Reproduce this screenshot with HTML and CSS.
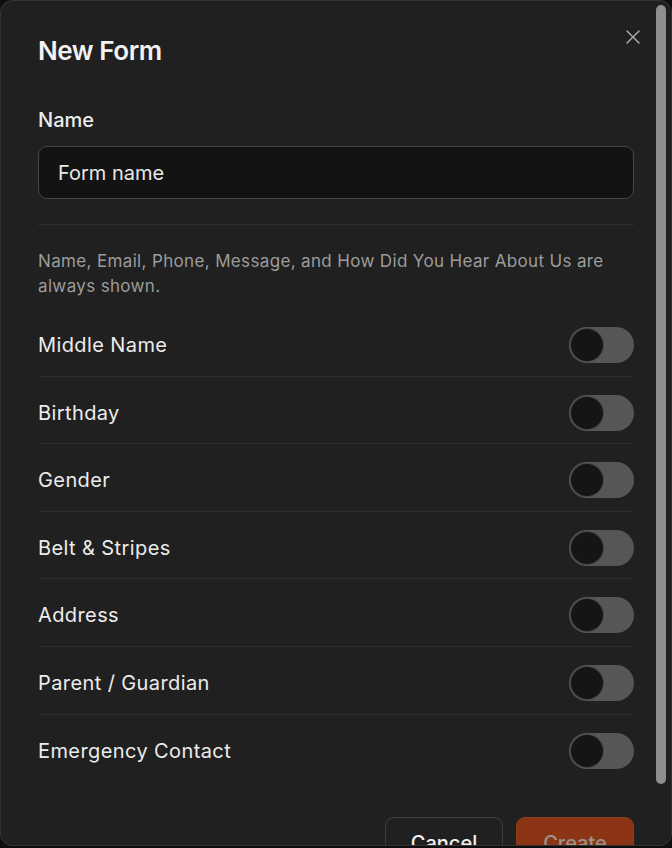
FILE: index.html
```html
<!DOCTYPE html>
<html lang="en">
<head>
<meta charset="utf-8">
<title>New Form</title>
<link rel="stylesheet" href="styles.css">
</head>
<body>
<div class="dialog">
  <div class="content">
    <div class="header">
      <h1 class="title">New Form</h1>
      <button class="close" aria-label="Close">
        <svg width="16" height="16" viewBox="0 0 16 16"><path d="M2 2 L14 14 M14 2 L2 14" stroke="#a3a3a3" stroke-width="1.6" stroke-linecap="round"/></svg>
      </button>
    </div>
    <label class="label">Name</label>
    <div class="input">Form name</div>
    <div class="divider"></div>
    <p class="help">Name, Email, Phone, Message, and How Did You Hear About Us are always shown.</p>
    <div class="list">
      <div class="row"><span class="row-label">Middle Name</span><span class="toggle"><span class="knob"></span></span></div>
      <div class="row"><span class="row-label">Birthday</span><span class="toggle"><span class="knob"></span></span></div>
      <div class="row"><span class="row-label">Gender</span><span class="toggle"><span class="knob"></span></span></div>
      <div class="row"><span class="row-label">Belt &amp; Stripes</span><span class="toggle"><span class="knob"></span></span></div>
      <div class="row"><span class="row-label">Address</span><span class="toggle"><span class="knob"></span></span></div>
      <div class="row"><span class="row-label">Parent / Guardian</span><span class="toggle"><span class="knob"></span></span></div>
      <div class="row"><span class="row-label">Emergency Contact</span><span class="toggle"><span class="knob"></span></span></div>
    </div>
    <div class="footer">
      <button class="btn btn-cancel">Cancel</button>
      <button class="btn btn-create">Create</button>
    </div>
  </div>
  <div class="scroll-thumb"></div>
</div>
</body>
</html>
```
FILE: styles.css
```css
* { box-sizing: border-box; }
html, body { margin: 0; padding: 0; }
body {
  background: #0e0e0e;
  width: 672px;
  height: 848px;
  overflow: hidden;
  font-family: Inter, "Noto Sans", "Liberation Sans", sans-serif;
}
.dialog {
  position: relative;
  width: 672px;
  height: 846px;
  background: #202020;
  border: 1px solid #333333;
  border-radius: 12px;
  overflow: hidden;
}
.content {
  padding: 0 37px 0 37px;
}
.header {
  display: flex;
  justify-content: space-between;
  align-items: flex-start;
  height: 104px;
}
.title {
  margin: 34px 0 0 0;
  font-size: 26px;
  line-height: 32px;
  font-weight: 600;
  color: #f2f2f2;
  letter-spacing: -0.45px;
}
.close {
  margin: 27px -8px 0 0;
  padding: 0;
  width: 18px;
  height: 18px;
  background: none;
  border: none;
  display: flex;
  align-items: center;
  justify-content: center;
}
.label {
  display: block;
  font-size: 20px;
  line-height: 24px;
  font-weight: 500;
  color: #ececec;
  margin: 3px 0 0 0;
}
.input {
  margin-top: 14px;
  height: 53px;
  background: #131313;
  border: 1px solid #464646;
  border-radius: 9px;
  padding: 0 19px;
  display: flex;
  align-items: center;
  font-size: 20px;
  color: #e8e8e8;
}
.divider {
  margin-top: 25px;
  height: 1px;
  background: #2f2f2f;
}
.help {
  margin: 24px 0 0 0;
  font-size: 17px;
  line-height: 25px;
  letter-spacing: 0.35px;
  color: #9c9c9c;
}
.list {
  margin-top: 10px;
}
.row {
  display: flex;
  align-items: center;
  justify-content: space-between;
  padding: 18px 0 12.6px 0;
  border-bottom: 1px solid #2d2d2d;
}
.row:last-child { border-bottom: none; }
.row-label {
  font-size: 20px;
  font-weight: 400;
  letter-spacing: 0.4px;
  color: #ececec;
}
.toggle {
  width: 65px;
  height: 36px;
  border-radius: 18px;
  background: #565656;
  display: flex;
  align-items: center;
  padding: 0 2px;
}
.knob {
  width: 32px;
  height: 32px;
  border-radius: 50%;
  background: #151515;
  box-shadow: 0 0 0 1px #454545;
}
.footer {
  display: flex;
  justify-content: flex-end;
  gap: 13px;
  margin-top: 36px;
}
.btn {
  width: 118px;
  height: 52px;
  border-radius: 9px;
  font-family: Inter, "Noto Sans", "Liberation Sans", sans-serif;
  font-size: 20px;
  font-weight: 500;
  padding: 0;
}
.btn-cancel {
  background: transparent;
  border: 1px solid #3d3d3d;
  color: #f0f0f0;
}
.btn-create {
  background: #8b3516;
  border: 1px solid #8f3a1a;
  color: #a09288;
}
.scroll-thumb {
  position: absolute;
  right: 5px;
  top: 4px;
  width: 10px;
  height: 779px;
  border-radius: 5px;
  background: #8e8e8e;
}
```
